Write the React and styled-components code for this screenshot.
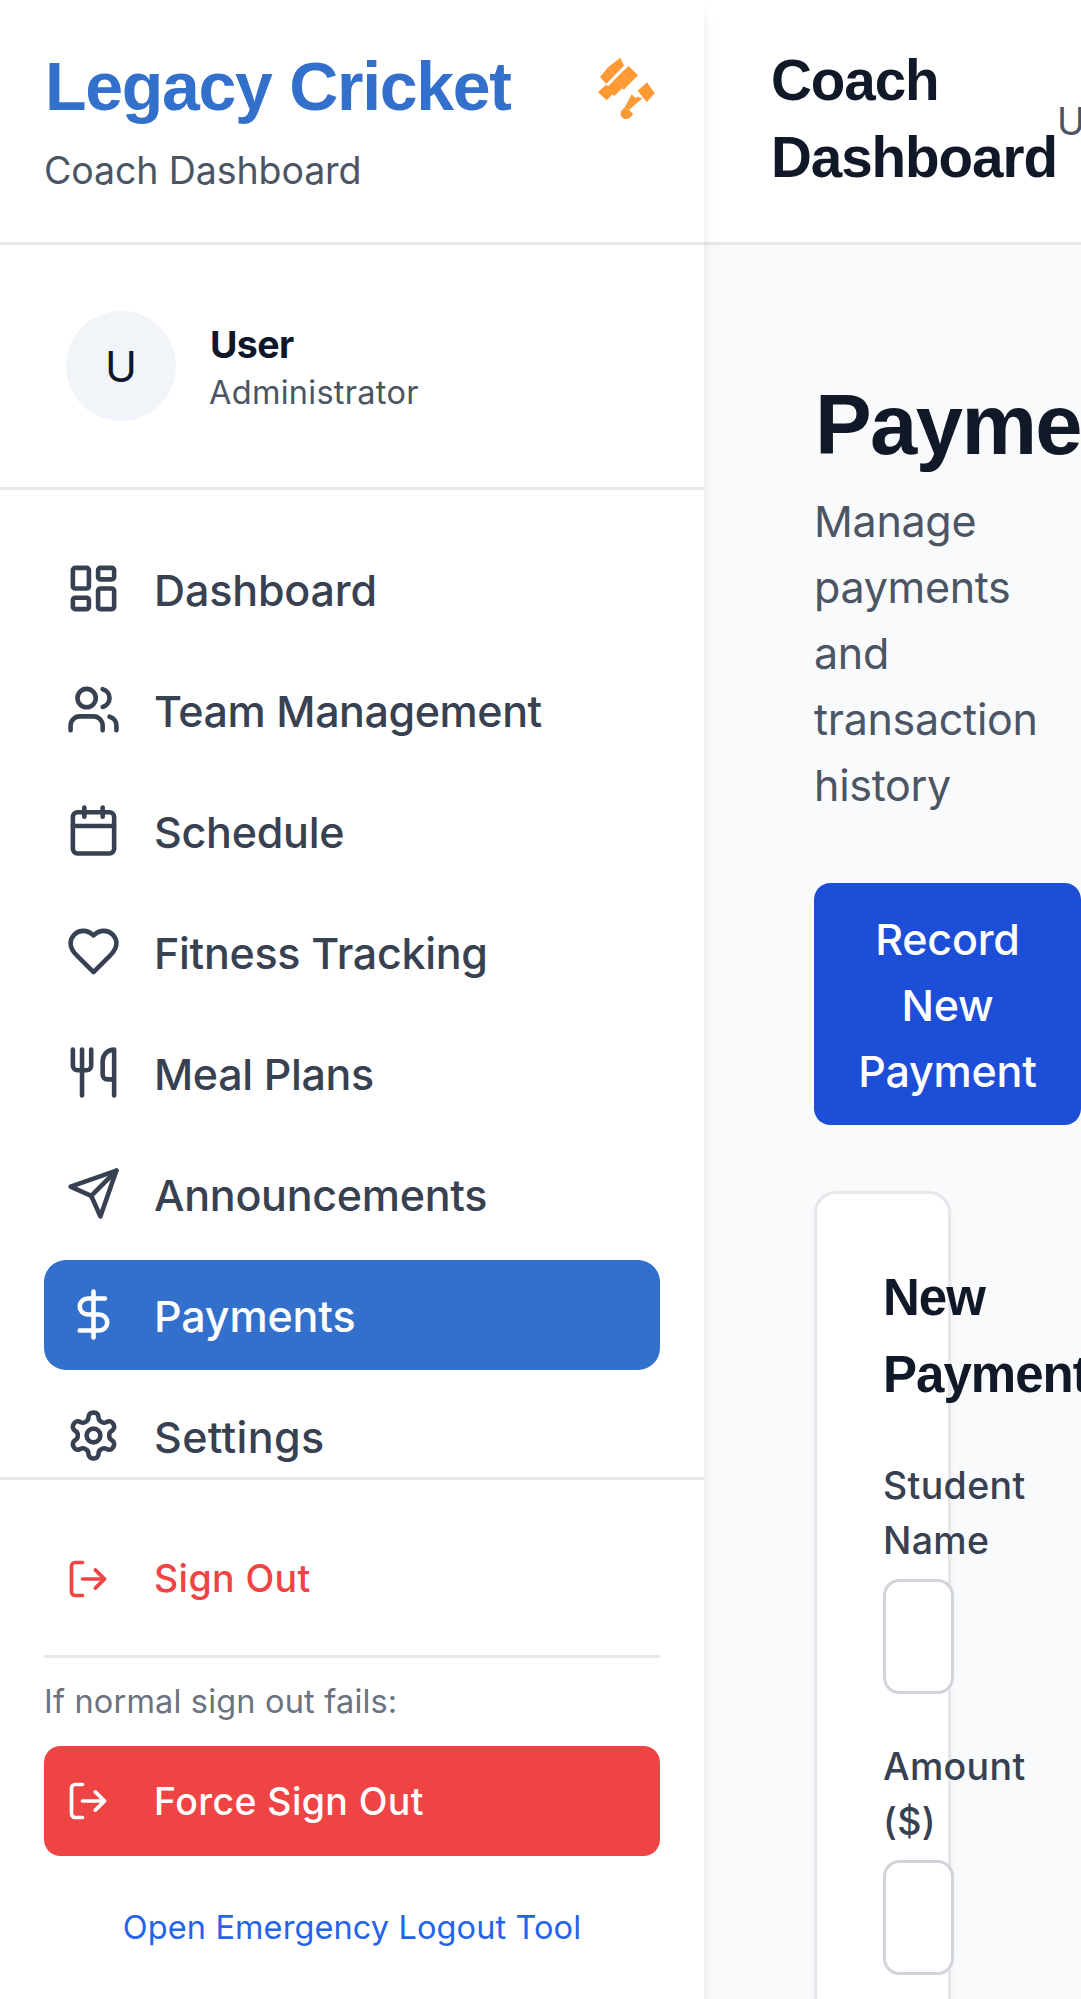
import React from "react";
import styled, { createGlobalStyle, css } from "styled-components";
import {
  LayoutDashboard,
  Users,
  Calendar,
  Utensils,
  DollarSign,
  LogOut,
} from "lucide-react";

const GlobalStyle = createGlobalStyle`
  *, *::before, *::after { box-sizing: border-box; }
  html, body { margin: 0; padding: 0; height: 1999px; overflow: hidden; background: #f9fafc; }
  body { font-family: Inter, "Liberation Sans", sans-serif; color: #0f172a; }
  h1, h2, h3, p { margin: 0; }
`;

const headingFont = css`
  font-family: "Liberation Sans", Arial, sans-serif;
  font-weight: 700;
  letter-spacing: -0.019em;
`;

const Shell = styled.div`
  display: flex;
  width: 1081px;
  height: 1999px;
  overflow: hidden;
`;

const Sidebar = styled.aside`
  flex: 0 0 704px;
  display: flex;
  flex-direction: column;
  height: 1999px;
  background: #fff;
  box-shadow: 0 11px 16.5px -2.75px rgba(0, 0, 0, 0.1), 0 5.5px 11px -5.5px rgba(0, 0, 0, 0.1);
  z-index: 1;
`;

const Brand = styled.div`
  flex: 0 0 245px;
  display: flex;
  justify-content: space-between;
  padding: 42px 44px 0;
  border-bottom: 3px solid #e5e7eb;
`;

const BrandName = styled.h1`
  ${headingFont}
  padding-left: 1px;
  font-size: 68px;
  line-height: 88px;
  color: #3370cc;
`;

const BrandSub = styled.p`
  margin-top: 13px;
  font-size: 37.5px;
  line-height: 55px;
  letter-spacing: -0.1px;
  color: #4b5563;
`;

const LogoSvg = styled.svg`
  width: 90px;
  height: 90px;
  margin: -2px -10px 0 0;
`;

const Profile = styled.div`
  flex: 0 0 245px;
  display: flex;
  align-items: center;
  gap: 33px;
  padding: 0 66px;
  border-bottom: 3px solid #e5e7eb;
`;

const Avatar = styled.div`
  display: flex;
  align-items: center;
  justify-content: center;
  width: 110px;
  height: 110px;
  border-radius: 50%;
  background: #f1f5f9;
  font-size: 43px;
`;

const ProfileName = styled.p`
  padding-left: 1px;
  font-size: 37.5px;
  line-height: 55px;
  font-weight: 700;
  letter-spacing: -0.6px;
`;

const ProfileRole = styled.p`
  font-size: 32.5px;
  line-height: 44px;
  letter-spacing: 0.28px;
  margin-top: -1px;
  padding-bottom: 1px;
  color: #4b5563;
`;

const Nav = styled.nav`
  flex: 0 0 987px;
  display: flex;
  flex-direction: column;
  gap: 11px;
  padding: 44px 44px 0;
  overflow: hidden;
`;

const NavItem = styled.a`
  flex: 0 0 110px;
  display: flex;
  align-items: center;
  gap: 33px;
  padding: 0 22px;
  border-radius: 22px;
  background: ${(p) => (p.$active ? "#3370cc" : "transparent")};
  color: ${(p) => (p.$active ? "#fff" : "#374151")};

  svg {
    margin-bottom: 1px;
  }
`;

const NavLabel = styled.span`
  padding-top: 2px;
  font-size: 43px;
  font-weight: 500;
  line-height: 66px;
  letter-spacing: ${(p) => p.$track}px;
`;

const Footer = styled.div`
  flex: 1;
  display: flex;
  flex-direction: column;
  padding: 44px 44px 0;
  border-top: 3px solid #e5e7eb;
`;

const SignOutButton = styled.a`
  flex: 0 0 110px;
  display: flex;
  align-items: center;
  gap: 44px;
  padding: 0 22px;
  border-radius: 16.5px;
  font-size: 37.5px;
  font-weight: 500;
  line-height: 55px;
  letter-spacing: 0.4px;
  background: ${(p) => (p.$solid ? "#ef4444" : "transparent")};
  color: ${(p) => (p.$solid ? "#fff" : "#ef4444")};
`;

const SignOutLabel = styled.span`
  padding-bottom: ${(p) => (p.$raised ? "1px" : "0")};
`;

const Fallback = styled.div`
  display: flex;
  flex-direction: column;
  margin-top: 21px;
  padding-top: 22px;
  border-top: 3px solid #e5e7eb;
`;

const FallbackNote = styled.p`
  margin-bottom: 22px;
  font-size: 32.5px;
  line-height: 44px;
  letter-spacing: 0.18px;
  color: #6b7280;
`;

const ToolLink = styled.a`
  margin-top: 50px;
  text-align: center;
  font-size: 32.5px;
  line-height: 44px;
  letter-spacing: 0.1px;
  color: #2563eb;
`;

const Main = styled.main`
  flex: 0 0 377px;
  display: flex;
  flex-direction: column;
  overflow: hidden;
  background: #f9fafc;
`;

const TopBar = styled.header`
  flex: 0 0 245px;
  display: flex;
  align-items: center;
  padding: 0 0 0 66px;
  border-bottom: 3px solid #e5e7eb;
  background: #fff;
`;

const TopTitle = styled.h2`
  ${headingFont}
  flex: 0 0 287px;
  min-width: 0;
  padding: 0 0 4px 1px;
  font-size: 56.6px;
  line-height: 77px;
  color: #111827;
`;

const TopUser = styled.span`
  padding-top: 1px;
  font-size: 37.5px;
  line-height: 55px;
  color: #4b5563;
`;

const Content = styled.section`
  display: flex;
  flex-direction: column;
  align-items: flex-start;
  padding: 130px 0 0 110px;
`;

const PageTitle = styled.h1`
  ${headingFont}
  padding-left: 1px;
  font-size: 85px;
  line-height: 99px;
  color: #111827;
`;

const PageText = styled.p`
  width: 240px;
  margin-top: 14px;
  font-size: 43px;
  line-height: 66px;
  letter-spacing: -0.3px;
  color: #4b5563;
`;

const PrimaryButton = styled.button`
  width: 267px;
  height: 242px;
  margin-top: 65px;
  padding: 2px 40px 0;
  border: 0;
  border-radius: 16.5px;
  background: #1d4ed8;
  color: #fff;
  font-family: inherit;
  font-size: 43px;
  font-weight: 500;
  line-height: 66px;
  letter-spacing: -0.2px;
`;

const Card = styled.div`
  width: 137px;
  height: 1100px;
  margin-top: 66px;
  padding: 65px 0 0 66px;
  border: 3px solid #e5e7eb;
  border-radius: 22px;
  background: #fff;
  box-shadow: 0 2.75px 5.5px rgba(0, 0, 0, 0.05);
`;

const CardTitle = styled.h3`
  ${headingFont}
  width: 200px;
  margin-bottom: 45px;
  font-size: 51px;
  line-height: 77px;
  color: #111827;
`;

const Field = styled.div`
  display: flex;
  flex-direction: column;
  width: 71px;
  margin-bottom: 45px;
`;

const FieldLabel = styled.label`
  width: 150px;
  margin-bottom: 11px;
  font-size: 37.5px;
  font-weight: 500;
  line-height: 55px;
  letter-spacing: 0.35px;
  color: #374151;
`;

const FieldInput = styled.input`
  width: 71px;
  height: 115px;
  padding: 0 20px;
  border: 3px solid #d1d5db;
  border-radius: 16.5px;
  background: #fff;
`;

function LineIcon({ size, children }) {
  return (
    <svg
      width={size}
      height={size}
      viewBox="0 0 24 24"
      fill="none"
      stroke="currentColor"
      strokeWidth="2"
      strokeLinecap="round"
      strokeLinejoin="round"
    >
      {children}
    </svg>
  );
}

function HeartIcon({ size }) {
  return (
    <LineIcon size={size}>
      <path d="M19 14c1.49-1.46 3-3.21 3-5.5A5.5 5.5 0 0 0 16.5 3c-1.76 0-3 .5-4.5 2-1.5-1.5-2.74-2-4.5-2A5.5 5.5 0 0 0 2 8.5c0 2.3 1.5 4.05 3 5.5l7 7Z" />
    </LineIcon>
  );
}

function PlaneIcon({ size }) {
  return (
    <LineIcon size={size}>
      <path d="m22 2-7 20-4-9-9-4Z" />
      <path d="M22 2 11 13" />
    </LineIcon>
  );
}

function GearIcon({ size }) {
  return (
    <LineIcon size={size}>
      <path d="M12.22 2h-.44a2 2 0 0 0-2 2v.18a2 2 0 0 1-1 1.73l-.43.25a2 2 0 0 1-2 0l-.15-.08a2 2 0 0 0-2.73.73l-.22.38a2 2 0 0 0 .73 2.73l.15.1a2 2 0 0 1 1 1.72v.51a2 2 0 0 1-1 1.74l-.15.09a2 2 0 0 0-.73 2.73l.22.38a2 2 0 0 0 2.73.73l.15-.08a2 2 0 0 1 2 0l.43.25a2 2 0 0 1 1 1.73V20a2 2 0 0 0 2 2h.44a2 2 0 0 0 2-2v-.18a2 2 0 0 1 1-1.73l.43-.25a2 2 0 0 1 2 0l.15.08a2 2 0 0 0 2.73-.73l.22-.39a2 2 0 0 0-.73-2.73l-.15-.08a2 2 0 0 1-1-1.74v-.5a2 2 0 0 1 1-1.74l.15-.09a2 2 0 0 0 .73-2.73l-.22-.38a2 2 0 0 0-2.73-.73l-.15.08a2 2 0 0 1-2 0l-.43-.25a2 2 0 0 1-1-1.73V4a2 2 0 0 0-2-2z" />
      <circle cx="12" cy="12" r="3" />
    </LineIcon>
  );
}

function CricketLogo() {
  return (
    <LogoSvg viewBox="0 0 270 270" fill="#ff9933">
      <path d="M84 82 121 53 132 77 104 106 79 132 60 111Z" />
      <path d="M146 78 174 106 131 149 126 145 103 168 98 163 80 181 54 157 77 135 85 138 105 118 124 98Z" />
      <path d="M201 127 224 160 200 186 173 152Z" />
      <path d="M155 163 166 174 173 170 187 175 147 210 159 221C154 233 144 237 135 237 124 234 119 224 124 212L135 201Z" />
      <path
        d="M84 82 104 106M124 98 152 126M105 118 129 143M135 202 147 211"
        stroke="#ffc48c"
        strokeWidth="1.5"
      />
    </LogoSvg>
  );
}

const navItems = [
  { label: "Dashboard", Icon: LayoutDashboard, track: -0.15 },
  { label: "Team Management", Icon: Users, track: -0.43 },
  { label: "Schedule", Icon: Calendar, track: -0.25 },
  { label: "Fitness Tracking", Icon: HeartIcon, track: -0.3 },
  { label: "Meal Plans", Icon: Utensils, track: -0.38 },
  { label: "Announcements", Icon: PlaneIcon, track: -0.28 },
  { label: "Payments", Icon: DollarSign, track: -0.15, active: true },
  { label: "Settings", Icon: GearIcon, track: 0.35 },
];

export default function App() {
  return (
    <>
      <GlobalStyle />
      <Shell>
        <Sidebar>
          <Brand>
            <div>
              <BrandName>Legacy Cricket</BrandName>
              <BrandSub>Coach Dashboard</BrandSub>
            </div>
            <CricketLogo />
          </Brand>
          <Profile>
            <Avatar>U</Avatar>
            <div>
              <ProfileName>User</ProfileName>
              <ProfileRole>Administrator</ProfileRole>
            </div>
          </Profile>
          <Nav>
            {navItems.map(({ label, Icon, active, track }) => (
              <NavItem key={label} $active={active}>
                <Icon size={55} />
                <NavLabel $track={track}>{label}</NavLabel>
              </NavItem>
            ))}
          </Nav>
          <Footer>
            <SignOutButton>
              <LogOut size={44} />
              <SignOutLabel $raised>Sign Out</SignOutLabel>
            </SignOutButton>
            <Fallback>
              <FallbackNote>If normal sign out fails:</FallbackNote>
              <SignOutButton $solid>
                <LogOut size={44} />
                <SignOutLabel>Force Sign Out</SignOutLabel>
              </SignOutButton>
              <ToolLink>Open Emergency Logout Tool</ToolLink>
            </Fallback>
          </Footer>
        </Sidebar>
        <Main>
          <TopBar>
            <TopTitle>Coach Dashboard</TopTitle>
            <TopUser>User</TopUser>
          </TopBar>
          <Content>
            <PageTitle>Payments</PageTitle>
            <PageText>Manage payments and transaction history</PageText>
            <PrimaryButton>Record New Payment</PrimaryButton>
            <Card>
              <CardTitle>New Payment</CardTitle>
              <Field>
                <FieldLabel>Student Name</FieldLabel>
                <FieldInput />
              </Field>
              <Field>
                <FieldLabel>Amount ($)</FieldLabel>
                <FieldInput />
              </Field>
            </Card>
          </Content>
        </Main>
      </Shell>
    </>
  );
}
